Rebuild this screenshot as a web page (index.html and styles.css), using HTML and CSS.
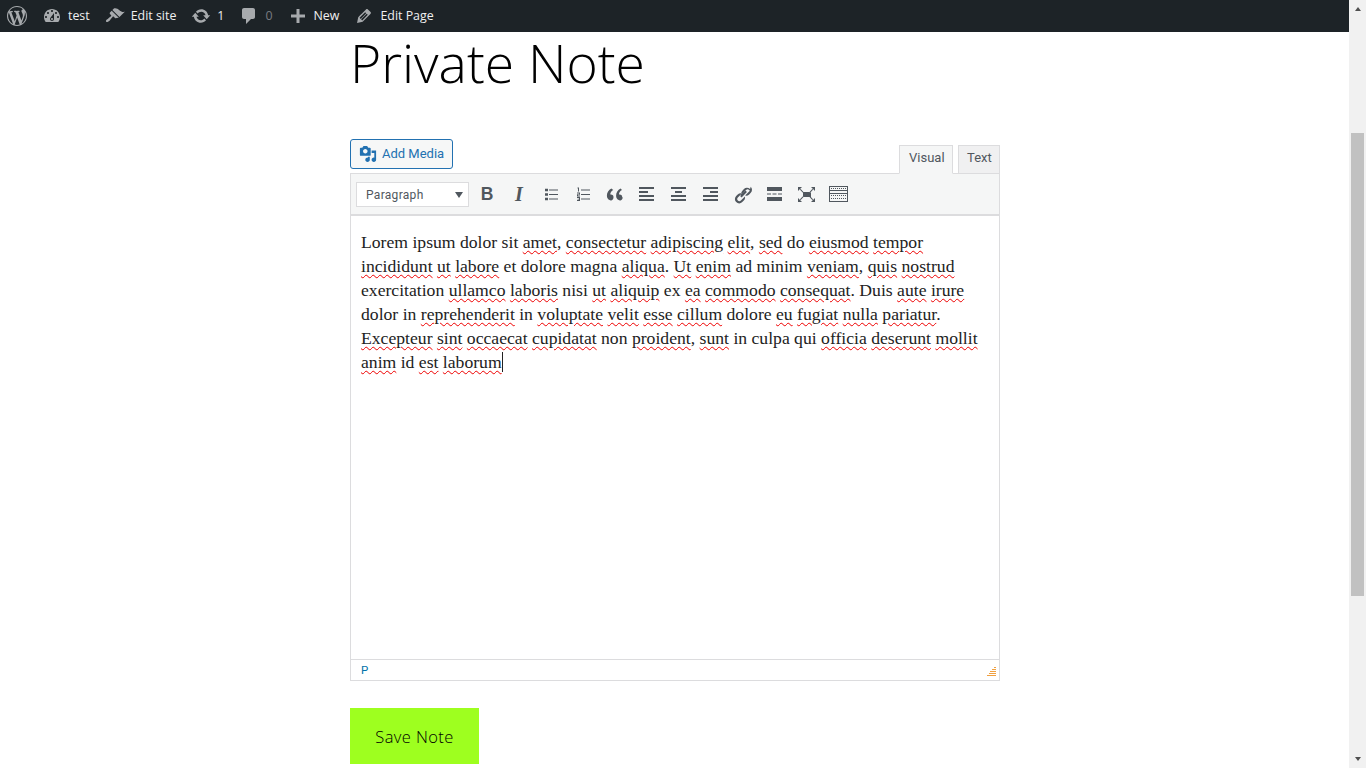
FILE: index.html
```html
<!DOCTYPE html>
<html lang="en">
<head>
<meta charset="utf-8">
<title>Private Note</title>
<link rel="stylesheet" href="styles.css">
</head>
<body>
<div class="page">
  <div class="main">
    <nav class="adminbar">
      <span class="ab-item"><svg class="ab-icon" viewBox="0 0 20 20"><path d="M20 10c0-5.51-4.49-10-10-10C4.48 0 0 4.49 0 10c0 5.52 4.48 10 10 10 5.51 0 10-4.48 10-10zM7.78 15.37L4.37 6.22c.55-.02 1.17-.08 1.17-.08.5-.06.44-1.13-.06-1.11 0 0-1.45.11-2.37.11-.18 0-.37 0-.58-.01C4.12 2.69 6.87 1.11 10 1.11c2.33 0 4.45.87 6.05 2.34-.68-.11-1.65.39-1.65 1.58 0 .74.45 1.36.9 2.1.35.61.55 1.36.55 2.46 0 1.49-1.4 5-1.4 5l-3.03-8.37c.54-.02.82-.17.82-.17.5-.05.44-1.25-.06-1.22 0 0-1.44.12-2.38.12-.87 0-2.33-.12-2.33-.12-.5-.03-.56 1.2-.06 1.22l.92.08 1.26 3.41zM17.41 10c.24-.64.74-1.87.43-4.25.7 1.29 1.05 2.71 1.05 4.25 0 3.29-1.73 6.24-4.4 7.78.97-2.59 1.94-5.2 2.92-7.78zM6.1 18.09C3.12 16.65 1.11 13.53 1.11 10c0-1.3.23-2.48.72-3.59C3.25 10.3 4.67 14.2 6.1 18.09zm4.03-6.63l2.58 6.98c-.86.29-1.76.45-2.71.45-.79 0-1.57-.11-2.29-.33.81-2.38 1.62-4.74 2.42-7.1z"/></svg></span>
      <span class="ab-item"><svg class="ab-icon" viewBox="0 0 20 20"><path d="M3.76 16h12.48c1.1-1.37 1.76-3.11 1.76-5 0-4.42-3.58-8-8-8s-8 3.58-8 8c0 1.89.66 3.63 1.76 5zM10 4c.55 0 1 .45 1 1s-.45 1-1 1-1-.45-1-1 .45-1 1-1zM6 6c.55 0 1 .45 1 1s-.45 1-1 1-1-.45-1-1 .45-1 1-1zm8 0c.55 0 1 .45 1 1s-.45 1-1 1-1-.45-1-1 .45-1 1-1zm-5.37 5.55L12 7v6c0 1.1-.9 2-2 2s-2-.9-2-2c0-.57.24-1.08.63-1.45zM4 10c.55 0 1 .45 1 1s-.45 1-1 1-1-.45-1-1 .45-1 1-1zm12 0c.55 0 1 .45 1 1s-.45 1-1 1-1-.45-1-1 .45-1 1-1zm-5 3c0-.55-.45-1-1-1s-1 .45-1 1 .45 1 1 1 1-.45 1-1z"/></svg>test</span>
      <span class="ab-item"><svg class="ab-icon" viewBox="0 0 20 20"><path d="M14.48 11.06L7.41 3.99l1.5-1.5c.5-.56 2.3-.47 3.51.32 1.21.8 1.43 1.28 2.91 2.1 1.18.64 2.45 1.26 4.45.85zm-.71.71L6.7 4.7 4.93 6.47c-.39.39-.39 1.02 0 1.41l1.06 1.06c.39.39.39 1.03 0 1.42-.6.6-1.43 1.11-2.21 1.69-.35.26-.7.53-1.01.84C1.43 13.23.4 14.91 1.2 15.7c.79.8 2.48-.23 3.82-1.57.31-.31.58-.66.84-1.01.58-.78 1.09-1.61 1.69-2.21.39-.39 1.02-.39 1.41 0l1.06 1.06c.39.39 1.02.39 1.41 0z"/></svg>Edit site</span>
      <span class="ab-item"><svg class="ab-icon" viewBox="0 0 20 20"><path d="M10.2 3.28c3.53 0 6.43 2.61 6.92 6h2.08l-3.5 4-3.5-4h2.32c-.45-1.97-2.21-3.45-4.32-3.45-1.45 0-2.73.71-3.54 1.78L4.95 5.66C6.23 4.2 8.11 3.28 10.2 3.28zm-.4 13.44c-3.52 0-6.43-2.61-6.92-6H.8l3.5-4c1.17 1.33 2.33 2.67 3.5 4H5.48c.45 1.97 2.21 3.45 4.32 3.45 1.45 0 2.73-.71 3.54-1.78l1.71 1.95c-1.28 1.46-3.15 2.38-5.25 2.38z"/></svg>1</span>
      <span class="ab-item ab-muted"><svg class="ab-icon" viewBox="0 0 20 20"><path d="M5 2h9c1.1 0 2 .9 2 2v7c0 1.1-.9 2-2 2h-2l-5 5v-5H5c-1.1 0-2-.9-2-2V4c0-1.1.9-2 2-2z"/></svg>0</span>
      <span class="ab-item"><svg class="ab-icon" viewBox="0 0 20 20"><path d="M17 8.5v3h-5.500v5.500h-3v-5.500H3v-3h5.500V3h3v5.500z"/></svg>New</span>
      <span class="ab-item"><svg class="ab-icon" viewBox="0 0 20 20"><path d="M13.89 3.39l2.71 2.72c.46.46.42 1.24.03 1.64l-8.01 8.02-5.56 1.16 1.16-5.58s7.6-7.63 7.99-8.03c.39-.39 1.22-.39 1.68.07zm-2.73 2.79l-5.59 5.61 1.11 1.11 5.54-5.65zm-2.97 8.23l5.58-5.6-1.07-1.08-5.59 5.6z"/></svg>Edit Page</span>
    </nav>
    <main class="content">
      <h1 class="title">Private Note</h1>
      <div class="tools">
        <button class="add-media" type="button"><svg class="media-icon" viewBox="0 0 20 20"><path d="M13 11V4c0-.55-.45-1-1-1h-1.670L9 1H5L3.670 3H2c-.55 0-1 .45-1 1v7c0 .55.45 1 1 1h10c.55 0 1-.45 1-1zM7 4.500c1.380 0 2.500 1.120 2.500 2.500S8.380 9.500 7 9.500 4.500 8.380 4.500 7 5.620 4.500 7 4.500zM14 6h5v10.500c0 1.380-1.120 2.500-2.500 2.500S14 17.880 14 16.500s1.120-2.500 2.500-2.500c.17 0 .34.020.5.050V9h-3V6zm-4 8.050V13h2v3.500c0 1.380-1.120 2.500-2.500 2.500S7 17.880 7 16.500 8.120 14 9.500 14c.17 0 .34.020.5.050z"/></svg>Add Media</button>
        <div class="tabs">
          <span class="tab tab-active">Visual</span>
          <span class="tab">Text</span>
        </div>
      </div>
      <section class="editor">
        <div class="toolbar">
          <div class="format-select"><span>Paragraph</span><i class="caret"></i></div>
          <div class="tool-btns">
            <span class="btn glyph-b">B</span>
            <span class="btn glyph-i">I</span>
            <span class="btn"><svg viewBox="0 0 20 20"><path d="M4 4.700h3v2.600H4zM4 9.200h3v2.600H4zM4 13.700h3v2.600H4zM8 5.500h9v1H8zM8 10h9v1H8zM8 14.500h9v1H8z"/></svg></span>
            <span class="btn"><svg viewBox="0 0 20 20"><path d="M4.500 3.500h1.500v4H5V4.500h-.5zM4 8.500h3v2.200H5v.8h2v1H4v-2.200h2v-.8H4zM4 13h3v4H4v-.9h2v-.7H4.500v-.7H6v-.8H4zM8 5.500h9v1H8zM8 10h9v1H8zM8 14.500h9v1H8z"/></svg></span>
            <span class="btn"><svg viewBox="1 0 20 20"><path d="M9.490 13.220c0-.74-.2-1.380-.61-1.900-.62-.78-1.830-.88-2.530-.72-.29-1.650 1.110-3.750 2.920-4.650L7.360 4.500C4.630 5.780 2.800 8.560 2.910 11.600c.04 1.640.36 2.890 1.590 3.960.88.77 2.200 1.120 3.300.61 1.100-.51 1.690-1.730 1.690-2.950zm8.700 0c0-.74-.2-1.380-.61-1.900-.62-.78-1.830-.88-2.530-.72-.29-1.650 1.110-3.750 2.920-4.650L16.560 4.500c-2.730 1.280-4.560 4.060-4.450 7.100.04 1.640.36 2.890 1.590 3.960.88.77 2.200 1.120 3.300.61 1.100-.51 1.690-1.730 1.690-2.950z"/></svg></span>
            <span class="btn"><svg viewBox="0 0 20 20"><path d="M2 3h15v2H2zM2 7h9v2H2zM2 11h15v2H2zM2 15h15v2H2z"/></svg></span>
            <span class="btn"><svg viewBox="0 0 20 20"><path d="M2 3h15v2H2zM6 7h7v2H6zM2 11h15v2H2zM2 15h15v2H2z"/></svg></span>
            <span class="btn"><svg viewBox="0 0 20 20"><path d="M2 3h15v2H2zM9 7h8v2H9zM2 11h15v2H2zM2 15h15v2H2z"/></svg></span>
            <span class="btn"><svg viewBox="0 0 20 20"><path d="M17.740 2.760c1.680 1.690 1.680 4.410 0 6.100l-1.530 1.520c-1.120 1.120-2.700 1.500-4.130 1.130l2.530-2.530 2.290-2.280-.76-.76c-.84-.84-2.210-.84-3.050 0l-2.280 2.290-2.530 2.530c-.37-1.430.01-3.010 1.130-4.130l1.520-1.530c1.690-1.680 4.410-1.680 6.100 0zM8.590 13.430l5.340-5.340-1.530-1.530-5.340 5.340zM8.830 9.370c-1.430-.37-3.010.01-4.130 1.130l-1.530 1.520c-1.680 1.690-1.680 4.410 0 6.100 1.690 1.680 4.410 1.680 6.100 0l1.530-1.520c1.120-1.120 1.500-2.700 1.130-4.130l-2.530 2.530-1.520 1.520c-.84.84-2.210.84-3.050 0-.84-.84-.84-2.210 0-3.050l1.520-1.520z"/></svg></span>
            <span class="btn"><svg viewBox="0 0 20 20"><path d="M2 3h15v4H2zM2 9.500h4v1H2zM7.500 9.500h4v1h-4zM13 9.500h4v1h-4zM2 13h15v4H2z"/></svg></span>
            <span class="btn"><svg viewBox="0 0 20 20"><path d="M1 3h4L1 7zM3.500 4.800l3 3.200-.9.500L3 5.700zM18 3v4l-4-4zM15.500 4.800l-3 3.200.9.500L16 5.700zM1 18v-4l4 4zM3.500 16.200l3-3.200-.9-.5L3 15.300zM18 18h-4l4-4zM15.500 16.200l-3-3.200.9-.5L16 15.300zM6 8h8v5H6z"/></svg></span>
            <span class="btn"><svg viewBox="0 0 20 20"><path fill-rule="evenodd" d="M0 2h19v5H0zM1 3v3h17V3zM0 9h19v9H0zM1 10v7h17v-7z"/><path class="kbd-side" d="M0 7h1v2H0zM18 7h1v2h-1z"/><path class="kbd-row" d="M2 4.500h15M2 11.500h15M2 14.500h15"/></svg></span>
          </div>
        </div>
        <div class="edit-area">
          <p class="edit-text">Lorem ipsum dolor sit <u>amet</u>, <u>consectetur</u> <u>adipiscing</u> <u>elit</u>, <u>sed</u> do <u>eiusmod</u> <u>tempor</u><br><u>incididunt</u> <u>ut</u> <u>labore</u> et dolore magna <u>aliqua</u>. <u>Ut</u> <u>enim</u> ad minim <u>veniam</u>, <u>quis</u> <u>nostrud</u><br>exercitation <u>ullamco</u> <u>laboris</u> nisi <u>ut</u> <u>aliquip</u> ex <u>ea</u> <u>commodo</u> <u>consequat</u>. Duis <u>aute</u> <u>irure</u><br>dolor in <u>reprehenderit</u> in <u>voluptate</u> <u>velit</u> <u>esse</u> <u>cillum</u> dolore <u>eu</u> <u>fugiat</u> <u>nulla</u> <u>pariatur</u>.<br><u>Excepteur</u> <u>sint</u> <u>occaecat</u> <u>cupidatat</u> non <u>proident</u>, <u>sunt</u> in culpa qui <u>officia</u> <u>deserunt</u> <u>mollit</u><br><u>anim</u> id <u>est</u> <u>laborum</u><span class="cursor"></span></p>
        </div>
        <div class="statusbar">
          <span class="path">P</span>
          <svg class="grip" viewBox="0 0 10 10"><path d="M8 0h2v1H8zM6 2h4v1H6zM4 4h6v1H4zM3 6h7v1H3zM1 8h9v1H1z"/></svg>
        </div>
      </section>
      <button class="save" type="button">Save Note</button>
    </main>
  </div>
  <aside class="scrollbar">
    <i class="arrow-up"></i>
    <div class="track"><div class="thumb"></div></div>
    <i class="arrow-down"></i>
  </aside>
</div>
</body>
</html>
```

FILE: styles.css
```css
* { box-sizing: border-box; }
html, body { margin: 0; height: 768px; overflow: hidden; background: #fff; }
.page { display: flex; height: 768px; }
.main { flex: 1; min-width: 0; }

.adminbar {
  height: 32px; background: #1d2327; color: #f0f0f1;
  display: flex; align-items: center; padding-left: 7px; gap: 15px;
  font: 12.4px/32px "Open Sans", sans-serif;
}
.ab-item { display: flex; align-items: center; gap: 6px; }
.ab-icon { width: 20px; height: 20px; fill: #a7aaad; }
.ab-muted { color: #787c82; }

.content { padding-left: 350px; width: 1000px; }
.title {
  margin: 0; height: 107px; font: 300 53.4px/61px "Open Sans", sans-serif; color: #000;
}
.tools { display: flex; justify-content: space-between; align-items: flex-start; height: 34px; }
.add-media {
  display: flex; align-items: center; gap: 5px; width: 103px; height: 30px; padding: 0 0 2px 8px;
  border: 1px solid #2271b1; border-radius: 3px; background: #f6f7f7; color: #2271b1;
  font: 13px "Roboto", sans-serif;
}
.media-icon { width: 18px; height: 18px; fill: #2271b1; margin-top: 2px; }
.tabs { display: flex; gap: 5px; align-self: flex-end; }
.tab {
  height: 28px; width: 42px; padding-left: 8px; border: 1px solid #dcdcde; border-bottom: 0;
  background: #f0f0f1; color: #50575e; font: 13px/24px "Roboto", sans-serif;
}
.tab-active {
  width: 54px; padding-left: 9px; background: #f5f6f6; height: 29px; margin-bottom: -1px;
  border-bottom: 1px solid #f5f6f6; position: relative;
}

.editor { border: 1px solid #dcdcde; height: 508px; display: flex; flex-direction: column; }
.toolbar {
  height: 42px; background: #f5f6f6; border-bottom: 2px solid #dcdcde;
  display: flex; align-items: center; padding-left: 5px;
}
.format-select {
  width: 113px; height: 25px; background: #fff; border: 1px solid #dcdcde;
  display: flex; align-items: center; justify-content: space-between; padding: 1px 5px 0 9px;
  color: #50575e; font: 12px "Roboto", sans-serif; letter-spacing: .3px;
}
.caret { width: 0; height: 0; border: 4.5px solid transparent; border-top: 6px solid #50575e; border-bottom: 0; }
.tool-btns { display: flex; margin-left: 2px; }
.btn { width: 32px; height: 20px; display: flex; align-items: center; justify-content: center; color: #50575e; }
.btn svg { width: 20px; height: 20px; fill: #50575e; }
.kbd-side { fill: #50575e; }
.kbd-row { fill: none; stroke: #50575e; stroke-width: 1; stroke-dasharray: 1 1; }
.glyph-b { font: bold 17.5px/20px "Liberation Sans", sans-serif; }
.glyph-i { font: italic bold 20px/20px "Liberation Serif", serif; }

.edit-area { flex: 1; padding: 14px 10px 0; }
.edit-text {
  margin: 0; font: 17.65px/24px "Liberation Serif", serif; color: #222; white-space: nowrap;
}
.edit-text u { text-decoration: underline wavy #e00; text-decoration-thickness: 1px; text-underline-offset: 2px; }
.cursor { display: inline-block; width: 1px; height: 20px; background: #222; vertical-align: -4px; }

.statusbar {
  height: 21px; border-top: 1px solid #dcdcde; display: flex; align-items: center;
  justify-content: space-between; padding: 0 3px 0 10px;
}
.path { color: #0073aa; font: 11.5px "Roboto", sans-serif; }
.grip { width: 10px; height: 10px; fill: #f0a040; margin-top: 3px; }

.save {
  display: block; margin-top: 27px; width: 129px; height: 56px; border: 0; padding: 0;
  background: #9eff1f; color: #000; font: 300 16.5px "Open Sans", sans-serif; letter-spacing: .4px;
}

.scrollbar { width: 17px; background: #f1f1f1; display: flex; flex-direction: column; align-items: center; }
.arrow-up { margin-top: 7px; border: 3.5px solid transparent; border-bottom: 4px solid #505050; border-top: 0; width: 0; height: 0; }
.arrow-down { margin: 0 0 7px; border: 3.5px solid transparent; border-top: 4px solid #505050; border-bottom: 0; width: 0; height: 0; }
.track { flex: 1; width: 100%; padding: 122px 2px 0; }
.thumb { height: 463px; background: #c1c1c1; }
```
